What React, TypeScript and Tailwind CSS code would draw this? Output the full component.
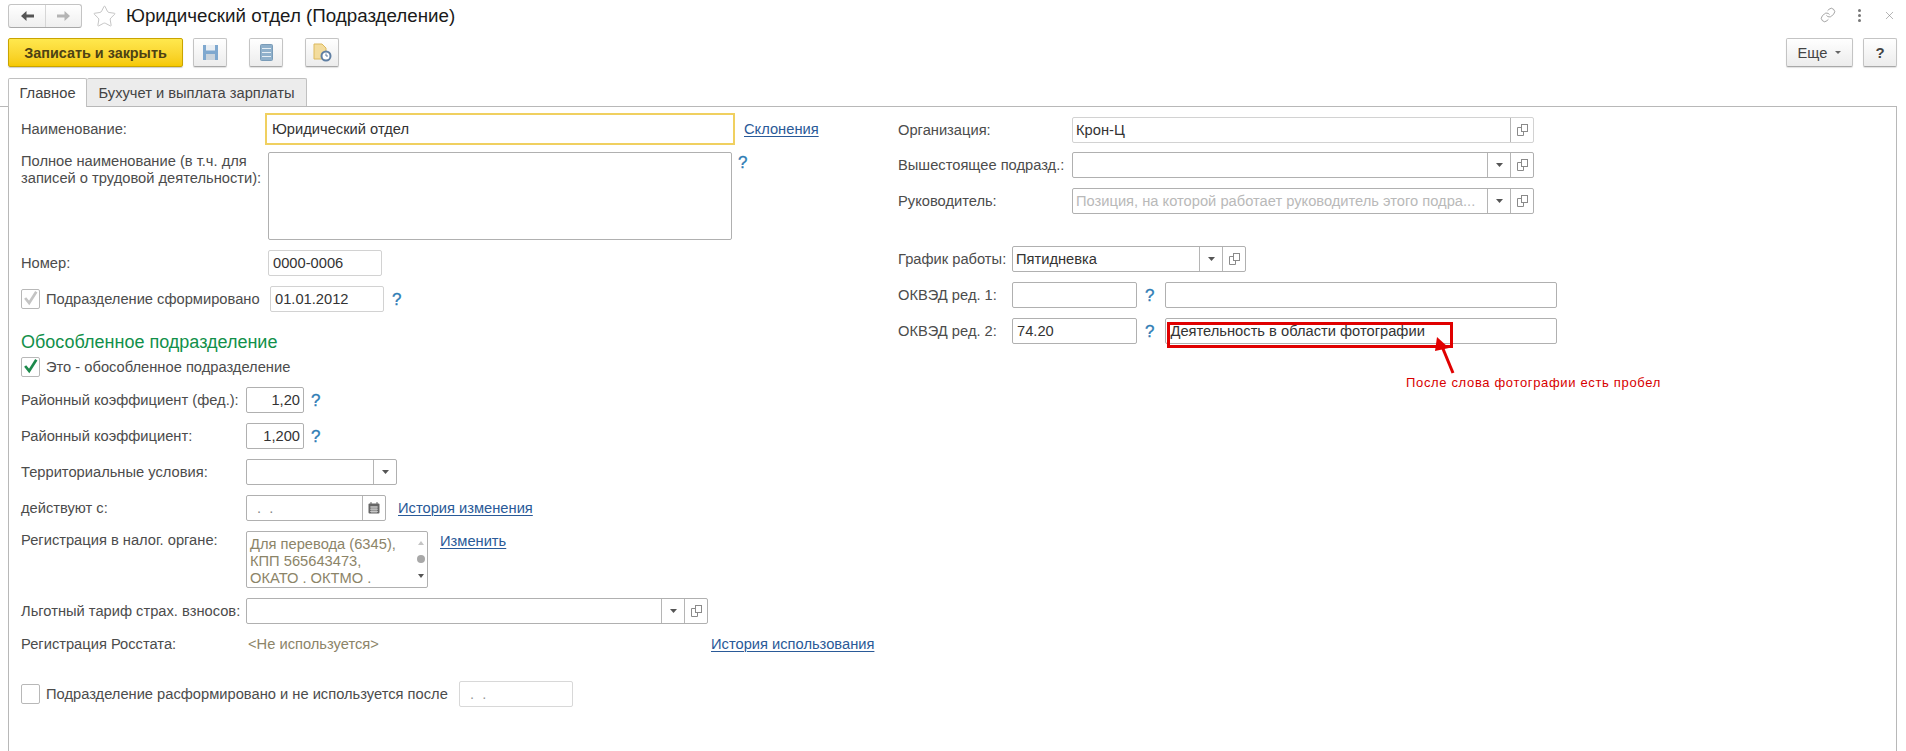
import { ReactNode } from "react";
import { Link as LinkIcon, Star, X } from "lucide-react";

function CopyIcon() {
  return (
    <svg width="13" height="14" viewBox="0 0 13 14" fill="none" stroke="#8a8a8a" strokeWidth="1">
      <rect x="5.5" y="1.5" width="6" height="7" />
      <path d="M5.5 4.5H1.5V12.5H7.5V8.5" />
    </svg>
  );
}

function DropArrow() {
  return (
    <svg width="7" height="4" viewBox="0 0 7 4">
      <path d="M0 0H7L3.5 4Z" fill="#555" />
    </svg>
  );
}

function Cell({ w, children }: { w: string; children: ReactNode }) {
  return <div className={`${w} h-full border-l border-[#b5b5b5] flex items-center justify-center shrink-0`}>{children}</div>;
}

function Help({ className = "" }: { className?: string }) {
  return <span className={`text-[17px] leading-none text-[#2f7db5] [-webkit-text-stroke:0.3px_#2f7db5] ${className}`}>?</span>;
}

function A({ children, className = "" }: { children: ReactNode; className?: string }) {
  return <span className={`text-[#2a5a98] underline underline-offset-2 decoration-1 whitespace-nowrap ${className}`}>{children}</span>;
}

function CheckBox({ checked, dim }: { checked?: boolean; dim?: boolean }) {
  return (
    <div className="w-[19px] h-[20px] border border-[#b8b8b8] rounded-[2px] bg-white flex items-center justify-center shrink-0 overflow-visible">
      {checked && (
        <svg width="19" height="20" viewBox="0 0 19 20" className="-mt-[3px]">
          <path d="M3.5 10L8 15.5L16 3" fill="none" stroke={dim ? "#c4c4c4" : "#1d8a4c"} strokeWidth="3" />
        </svg>
      )}
    </div>
  );
}

function ToolButton({ children }: { children: ReactNode }) {
  return (
    <button className="w-[34px] h-[29px] border border-[#c4c4c4] border-b-[#a8a8a8] rounded-[2px] bg-gradient-to-b from-white to-[#ececec] shadow-[0_1px_1px_rgba(0,0,0,0.12)] flex items-center justify-center">
      {children}
    </button>
  );
}

function Row({ label, labelW, className = "", children }: { label?: string; labelW: string; className?: string; children: ReactNode }) {
  return (
    <div className={`flex items-center h-[26px] ${className}`}>
      <div className={`${labelW} shrink-0 whitespace-nowrap`}>{label}</div>
      {children}
    </div>
  );
}

function Box({ w, border = "border-[#b0b0b0]", right, text, className = "" }: { w: string; border?: string; right?: boolean; text?: string; className?: string }) {
  return (
    <div className={`${w} h-[26px] border ${border} rounded-[2px] bg-white flex items-center px-[4px] text-[#333] shrink-0 ${right ? "justify-end" : ""} ${className}`}>
      {text}
    </div>
  );
}

function Combo({ w, text, placeholder, drop = true, copy = true, light }: { w: string; text?: string; placeholder?: string; drop?: boolean; copy?: boolean; light?: boolean }) {
  return (
    <div className={`${w} h-[26px] border ${light ? "border-[#d2d2d2]" : "border-[#b0b0b0]"} rounded-[2px] bg-white flex items-center shrink-0`}>
      <div className={`flex-1 min-w-0 px-[3px] whitespace-nowrap overflow-hidden ${placeholder ? "text-[#b9b9b9]" : "text-[#333]"}`}>{text ?? placeholder}</div>
      {drop && <Cell w="w-[23px]"><DropArrow /></Cell>}
      {copy && <Cell w="w-[23px]"><CopyIcon /></Cell>}
    </div>
  );
}

export default function App() {
  return (
    <div className="w-[1906px] h-[751px] bg-white overflow-hidden flex flex-col text-[14.7px] leading-[16px] text-[#4c4c4c] font-['Liberation_Sans',Arial,sans-serif]">
      {/* title bar */}
      <div className="h-[38px] shrink-0 flex items-start pl-[8px] pr-[10px] pt-[4px]">
        <div className="w-[74px] h-[24px] border border-[#c4c4c4] border-b-[#a8a8a8] rounded-[3px] bg-gradient-to-b from-white to-[#efefef] flex items-center">
          <div className="w-[37px] h-full flex items-center justify-center border-r border-[#d6d6d6]">
            <svg width="15" height="12" viewBox="0 0 15 12">
              <path d="M6.5 1L1 6L6.5 11V7.5H14V4.5H6.5Z" fill="#555" />
            </svg>
          </div>
          <div className="flex-1 flex items-center justify-center">
            <svg width="15" height="12" viewBox="0 0 15 12">
              <path d="M8.5 1L14 6L8.5 11V7.5H1V4.5H8.5Z" fill="#b4b4b4" />
            </svg>
          </div>
        </div>
        <Star size={25} strokeWidth={0.8} className="ml-[10px] text-[#b9b9b9] shrink-0" />
        <div className="ml-[9px] mt-[1px] text-[18.75px] leading-[22px] text-[#1a1a1a] whitespace-nowrap">Юридический отдел (Подразделение)</div>
        <div className="ml-auto flex items-center gap-[22px] pt-[3px] text-[#777]">
          <LinkIcon size={16} strokeWidth={1} />
          <div className="flex flex-col gap-[2px]">
            <span className="w-[3px] h-[3px] bg-[#777] rounded-full" />
            <span className="w-[3px] h-[3px] bg-[#777] rounded-full" />
            <span className="w-[3px] h-[3px] bg-[#777] rounded-full" />
          </div>
          <X size={13} strokeWidth={1} />
        </div>
      </div>

      {/* toolbar */}
      <div className="h-[29px] shrink-0 flex items-center pl-[8px] pr-[9px]">
        <button className="w-[175px] h-[29px] rounded-[2px] border border-[#c9a400] bg-gradient-to-b from-[#ffe84d] to-[#f6c900] font-bold text-[14.4px] text-[#4d4214] shadow-[0_1px_1px_rgba(0,0,0,0.2)]">
          Записать и закрыть
        </button>
        <div className="ml-[10px]">
          <ToolButton>
            <svg width="17" height="17" viewBox="0 0 17 17">
              <path d="M1 1H16V16H1Z" fill="#7fa8cf" />
              <rect x="4" y="1" width="9" height="5.5" fill="#e9eef3" />
              <rect x="4" y="10" width="9" height="6" fill="#c9d3dc" />
            </svg>
          </ToolButton>
        </div>
        <div className="ml-[22px]">
          <ToolButton>
            <svg width="13" height="17" viewBox="0 0 13 17">
              <rect x="0.5" y="0.5" width="12" height="16" rx="1" fill="#8fb0cb" stroke="#7a9cb8" />
              <path d="M2 4.5H11M2 8.5H11M2 12.5H11" stroke="#e6eef4" strokeWidth="1" />
            </svg>
          </ToolButton>
        </div>
        <div className="ml-[22px]">
          <ToolButton>
            <svg width="19" height="19" viewBox="0 0 19 19">
              <path d="M1 1H9L13 5V16H1Z" fill="#f3dc9d" stroke="#dcb95e" />
              <circle cx="13" cy="13" r="4.5" fill="#fff" stroke="#5f7fa3" strokeWidth="2" />
              <path d="M13 10.5V13H15" stroke="#5f7fa3" fill="none" />
            </svg>
          </ToolButton>
        </div>
        <button className="ml-auto w-[67px] h-[29px] border border-[#c4c4c4] border-b-[#a8a8a8] rounded-[2px] bg-gradient-to-b from-white to-[#ececec] shadow-[0_1px_1px_rgba(0,0,0,0.12)] flex items-center justify-center gap-[8px] text-[#444]">
          Еще
          <svg width="6" height="3" viewBox="0 0 6 3">
            <path d="M0 0H6L3 3Z" fill="#666" />
          </svg>
        </button>
        <button className="ml-[10px] w-[34px] h-[29px] border border-[#c4c4c4] border-b-[#a8a8a8] rounded-[2px] bg-gradient-to-b from-white to-[#ececec] shadow-[0_1px_1px_rgba(0,0,0,0.12)] font-bold text-[15px] text-[#444]">
          ?
        </button>
      </div>

      {/* tabs */}
      <div className="h-[29px] mt-[11px] mr-[9px] shrink-0 flex items-end pl-[8px] border-b border-[#b8b8b8] relative">
        <div className="w-[79px] h-[29px] -mb-px bg-white border border-b-0 border-[#c0c0c0] rounded-t-[2px] flex items-center justify-center text-[#444]">Главное</div>
        <div className="w-[220px] h-[28px] bg-[#ececec] border border-l-0 border-b-0 border-[#c0c0c0] rounded-t-[2px] flex items-center justify-center text-[#444]">Бухучет и выплата зарплаты</div>
      </div>

      {/* form */}
      <div className="flex-1 ml-[8px] mr-[9px] border-l border-r border-[#b8b8b8] flex min-h-0">
        <div className="w-[889px] shrink-0 pl-[12px] pt-[6px]">
          <div className="flex items-center h-[32px]">
            <div className="w-[244px] shrink-0">Наименование:</div>
            <div className="w-[470px] h-[32px] border-2 border-[#f0d060] flex items-center px-[5px] text-[#333]">Юридический отдел</div>
            <A className="ml-[9px]">Склонения</A>
          </div>
          <div className="flex mt-[7px] h-[88px]">
            <div className="w-[247px] shrink-0 pt-[1px] leading-[17px]">Полное наименование (в т.ч. для<br />записей о трудовой деятельности):</div>
            <div className="w-[464px] h-[88px] border border-[#b0b0b0] rounded-[2px]" />
            <Help className="ml-[6px] mt-[2px]" />
          </div>
          <Row label="Номер:" labelW="w-[247px]" className="mt-[10px]">
            <Box w="w-[114px]" border="border-[#d2d2d2]" text="0000-0006" />
          </Row>
          <div className="flex items-center h-[26px] mt-[10px]">
            <CheckBox checked dim />
            <div className="ml-[6px] w-[224px] shrink-0 whitespace-nowrap">Подразделение сформировано</div>
            <Box w="w-[114px]" border="border-[#d2d2d2]" text="01.01.2012" />
            <Help className="ml-[8px]" />
          </div>
          <div className="mt-[20px] text-[18px] leading-[20px] text-[#11904a]">Обособленное подразделение</div>
          <div className="flex items-center h-[20px] mt-[5px]">
            <CheckBox checked />
            <div className="ml-[6px]">Это - обособленное подразделение</div>
          </div>
          <Row label="Районный коэффициент (фед.):" labelW="w-[225px]" className="mt-[10px]">
            <Box w="w-[58px]" right text="1,20" className="pr-[3px]" />
            <Help className="ml-[7px]" />
          </Row>
          <Row label="Районный коэффициент:" labelW="w-[225px]" className="mt-[10px]">
            <Box w="w-[58px]" right text="1,200" className="pr-[3px]" />
            <Help className="ml-[7px]" />
          </Row>
          <Row label="Территориальные условия:" labelW="w-[225px]" className="mt-[10px]">
            <Combo w="w-[151px]" copy={false} />
          </Row>
          <Row label="действуют с:" labelW="w-[225px]" className="mt-[10px]">
            <div className="w-[140px] h-[26px] border border-[#b0b0b0] rounded-[2px] flex items-center">
              <div className="flex-1 pl-[10px] text-[#888] whitespace-pre">.  .</div>
              <Cell w="w-[23px]">
                <svg width="12" height="12" viewBox="0 0 12 12">
                  <rect x="0.5" y="1.5" width="11" height="10" rx="1" fill="#666" />
                  <path d="M2 5H10M2 7.2H10M2 9.4H10M4 4V11M6 4V11M8 4V11" stroke="#e8e8e8" strokeWidth="0.7" />
                  <path d="M3 0V2M9 0V2" stroke="#666" />
                </svg>
              </Cell>
            </div>
            <A className="ml-[12px]">История изменения</A>
          </Row>
          <div className="flex mt-[10px] h-[57px]">
            <div className="w-[225px] shrink-0 pt-[1px]">Регистрация в налог. органе:</div>
            <div className="w-[182px] h-[57px] border border-[#b0b0b0] rounded-[2px] flex pl-[3px] text-[#8c8468] leading-[17px] overflow-hidden">
              <div className="flex-1 pt-[4px] whitespace-nowrap">Для перевода (6345),<br />КПП 565643473,<br />ОКАТО . ОКТМО .</div>
              <div className="w-[13px] flex flex-col items-center justify-between py-[9px]">
                <svg width="6" height="4" viewBox="0 0 6 4"><path d="M0 4H6L3 0Z" fill="#c4c4c4" /></svg>
                <span className="w-[8px] h-[8px] rounded-full bg-[#a8a8a8] -mt-[2px]" />
                <svg width="6" height="4" viewBox="0 0 6 4"><path d="M0 0H6L3 4Z" fill="#555" /></svg>
              </div>
            </div>
            <A className="ml-[12px] mt-[2px] h-[18px]">Изменить</A>
          </div>
          <Row label="Льготный тариф страх. взносов:" labelW="w-[225px]" className="mt-[10px]">
            <Combo w="w-[462px]" />
          </Row>
          <div className="flex items-center h-[20px] mt-[10px]">
            <div className="w-[227px] shrink-0">Регистрация Росстата:</div>
            <div className="text-[#8c8468] w-[463px] shrink-0">&lt;Не используется&gt;</div>
            <A>История использования</A>
          </div>
          <div className="flex items-center h-[26px] mt-[27px]">
            <CheckBox />
            <div className="ml-[6px] w-[413px] shrink-0 whitespace-nowrap">Подразделение расформировано и не используется после</div>
            <div className="w-[114px] h-[26px] border border-[#d8d8d8] rounded-[2px] pl-[10px] flex items-center text-[#999] whitespace-pre">.  .</div>
          </div>
        </div>

        <div className="relative flex-1 pt-[10px]">
          <Row label="Организация:" labelW="w-[174px]">
            <Combo w="w-[462px]" text="Крон-Ц" drop={false} light />
          </Row>
          <Row label="Вышестоящее подразд.:" labelW="w-[174px]" className="mt-[9px]">
            <Combo w="w-[462px]" />
          </Row>
          <Row label="Руководитель:" labelW="w-[174px]" className="mt-[10px]">
            <Combo w="w-[462px]" placeholder="Позиция, на которой работает руководитель этого подра..." />
          </Row>
          <Row label="График работы:" labelW="w-[114px]" className="mt-[32px]">
            <Combo w="w-[234px]" text="Пятидневка" />
          </Row>
          <Row label="ОКВЭД ред. 1:" labelW="w-[114px]" className="mt-[10px]">
            <Box w="w-[125px]" />
            <Help className="ml-[8px]" />
            <Box w="w-[392px]" className="ml-[11px]" />
          </Row>
          <Row label="ОКВЭД ред. 2:" labelW="w-[114px]" className="mt-[10px]">
            <Box w="w-[125px]" text="74.20" className="px-[3px]" />
            <Help className="ml-[8px]" />
            <Box w="w-[392px]" text="Деятельность в области фотографии" className="ml-[11px] px-[3px]" />
          </Row>

          {/* annotation drawn over the field */}
          <div className="absolute left-[269px] top-[215px] w-[286px] h-[26px] border-[3px] border-[#e00000]" />
          <svg className="absolute left-[530px] top-[228px]" width="30" height="42" viewBox="0 0 30 42">
            <path d="M25 38L13 9" stroke="#e00000" strokeWidth="3" fill="none" />
            <path d="M9 2L21 13L7 16Z" fill="#e00000" />
          </svg>
          <div className="absolute left-[508px] top-[268px] text-[13px] tracking-[0.66px] text-[#d80000] whitespace-nowrap">После слова фотографии есть пробел</div>
        </div>
      </div>
    </div>
  );
}
